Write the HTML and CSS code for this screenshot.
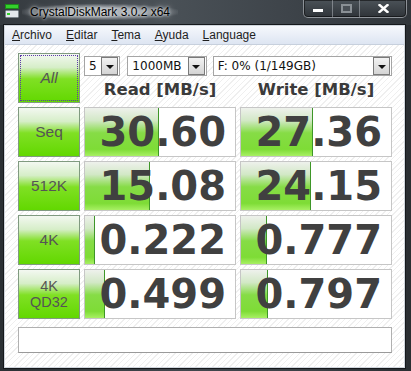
FILE: index.html
```html
<!DOCTYPE html>
<html lang="es">
<head>
  <meta charset="UTF-8">
  <title>CrystalDiskMark 3.0.2 x64</title>
  <link rel="stylesheet" href="styles.css">
</head>
<body>

  <div class="window">

    <!-- ====== Title Bar ====== -->
    <div class="titlebar">
      <svg class="app-icon" width="14" height="14" viewBox="0 0 14 14">
        <rect x="0.5" y="0.5" width="13" height="4" fill="#34d02c" stroke="#1d8a1a"/>
        <rect x="0.5" y="6.5" width="13" height="7" rx="1" fill="#e4e8ec" stroke="#7d858c"/>
        <rect x="2" y="9" width="3" height="2" fill="#34d02c"/>
      </svg>
      <span class="title">CrystalDiskMark 3.0.2 x64</span>
      <div class="caption">
        <span class="cap cap-min"><i></i></span>
        <span class="cap cap-max"><i></i></span>
        <span class="cap cap-close">
          <svg width="11" height="9" viewBox="0 0 11 9">
            <path d="M1.5 1 L9.5 8 M9.5 1 L1.5 8" stroke="#fff" stroke-width="2.4" stroke-linecap="square"/>
          </svg>
        </span>
      </div>
    </div>

    <!-- ====== Client Area ====== -->
    <div class="client">
      <div class="menubar">
        <span><u>A</u>rchivo</span>
        <span><u>E</u>ditar</span>
        <span><u>T</u>ema</span>
        <span><u>A</u>yuda</span>
        <span><u>L</u>anguage</span>
      </div>

      <div class="board">
        <div class="label all"><span>All</span></div>
        <div class="top">
          <div class="selects">
            <div class="select sel-count"><span>5</span><b class="arrow"></b></div>
            <div class="select sel-size"><span>1000MB</span><b class="arrow"></b></div>
            <div class="select sel-drive"><span>F: 0% (1/149GB)</span><b class="arrow"></b></div>
          </div>
          <div class="heads">
            <div>Read [MB/s]</div>
            <div>Write [MB/s]</div>
          </div>
        </div>

        <div class="label">Seq</div>
        <div class="cell"><div class="bar" style="width:74px"></div><span>30.60</span></div>
        <div class="cell"><div class="bar" style="width:72px"></div><span>27.36</span></div>

        <div class="label">512K</div>
        <div class="cell"><div class="bar" style="width:65px"></div><span>15.08</span></div>
        <div class="cell"><div class="bar" style="width:70px"></div><span>24.15</span></div>

        <div class="label">4K</div>
        <div class="cell"><div class="bar" style="width:10px"></div><span>0.222</span></div>
        <div class="cell"><div class="bar" style="width:26px"></div><span>0.777</span></div>

        <div class="label two"><span>4K</span><span>QD32</span></div>
        <div class="cell"><div class="bar" style="width:20px"></div><span>0.499</span></div>
        <div class="cell"><div class="bar" style="width:27px"></div><span>0.797</span></div>

        <div class="status"></div>
      </div>
    </div>

  </div>

</body>
</html>
```

FILE: styles.css
```css
/* ====== General ====== */
body {
  margin: 0;
  background: #2c3136;
  font-family: "Liberation Sans", Arial, sans-serif;
}

.window {
  width: 411px;
  height: 371px;
  display: flex;
  flex-direction: column;
  background: linear-gradient(90deg, #2b3034 0%, #41474d 45%, #3a4045 75%, #2a2e32 100%);
}

/* ====== Title Bar ====== */
.titlebar {
  height: 25px;
  display: flex;
  align-items: flex-start;
  padding: 0 5px 0 5px;
  background: linear-gradient(90deg, #353a3f 0%, #4a5157 40%, #3e444a 70%, #30353a 100%);
}

.app-icon {
  margin-top: 4px;
}

.title {
  margin: 4px 0 0 3px;
  padding: 0 8px;
  font-size: 12px;
  line-height: 16px;
  color: #000;
  background: radial-gradient(ellipse at center, rgba(200,205,210,0.75) 35%, rgba(200,205,210,0) 75%);
  text-shadow: 0 0 3px rgba(235,238,240,0.9), 0 0 6px rgba(235,238,240,0.8);
}

.caption {
  margin-left: auto;
  margin-right: -1px;
  display: flex;
  height: 17px;
  border: 1px solid rgba(200,205,210,0.55);
  border-top: none;
  border-radius: 0 0 5px 5px;
  background: linear-gradient(#4b5258, #2f3439);
  box-shadow: inset 0 0 0 1px rgba(0,0,0,0.5);
}

.cap {
  display: flex;
  align-items: center;
  justify-content: center;
}

.cap-min {
  width: 28px;
  border-right: 1px solid rgba(200,205,210,0.45);
}

.cap-min i {
  width: 10px;
  height: 3px;
  margin-top: 4px;
  background: #fff;
}

.cap-max {
  width: 26px;
  border-right: 1px solid rgba(200,205,210,0.45);
}

.cap-max i {
  width: 7px;
  height: 5px;
  border: 2px solid #8a9095;
  background: #4a5056;
}

.cap-close {
  width: 46px;
}

/* ====== Client ====== */
.client {
  flex: 1;
  margin: 0 6px 3px 4px;
  border: 1px solid #cfd5dc;
  box-shadow: 0 0 0 1px #15181b;
  display: flex;
  flex-direction: column;
  background: repeating-linear-gradient(-45deg, #ffffff 0 3px, #efefef 3px 4px);
}

.menubar {
  height: 18px;
  display: flex;
  align-items: center;
  background: linear-gradient(#f6f8fc, #dde5f2);
  border-bottom: 1px solid #c7d0dd;
  font-size: 12px;
  color: #1e1e1e;
}

.menubar span {
  padding: 0 7px;
}

/* ====== Board ====== */
.board {
  display: grid;
  grid-template-columns: 62px 152px 152px;
  grid-template-rows: repeat(5, 50px) 30px;
  gap: 4px;
  padding: 8px 0 0 13px;
}

.label {
  display: flex;
  flex-direction: column;
  align-items: center;
  justify-content: center;
  text-align: center;
  border: 1px solid #809a80;
  background: linear-gradient(#f3f8f1 0%, #d6eec8 28%, #80e024 52%, #62d800 100%);
  font-family: "Liberation Sans", Arial, sans-serif;
  font-size: 15.5px;
  color: #555;
}

.label.two {
  font-size: 14.5px;
  line-height: 16px;
}

.label.all span {
  font-style: italic;
}

.label.all {
  outline: 1px dotted #5c3aa8;
  outline-offset: -3px;
}

.top {
  grid-column: span 2;
  display: flex;
  flex-direction: column;
}

.selects {
  display: flex;
  margin-top: 3px;
  height: 20px;
}

.select {
  display: flex;
  align-items: center;
  justify-content: space-between;
  background: #fff;
  border: 1px solid #a5a5a5;
  padding: 0 1px 0 4px;
  font-family: "DejaVu Sans", sans-serif;
  font-size: 12px;
  color: #111;
}

.sel-count {
  width: 30px;
}

.sel-size {
  width: 74px;
  margin-left: 7px;
}

.sel-drive {
  width: 176px;
  margin-left: 6px;
}

.arrow {
  width: 15px;
  height: 16px;
  border: 1px solid #7a7a7a;
  background: linear-gradient(#f2f2f2, #d4d4d4);
  display: flex;
  align-items: center;
  justify-content: center;
}

.arrow::after {
  content: "";
  border-left: 4px solid transparent;
  border-right: 4px solid transparent;
  border-top: 4px solid #111;
  margin-top: 2px;
}

.heads {
  flex: 1;
  display: grid;
  grid-template-columns: 152px 152px;
  gap: 4px;
  align-items: end;
  padding-bottom: 3px;
}

.heads div {
  text-align: center;
  font-family: "DejaVu Sans", sans-serif;
  font-weight: bold;
  font-size: 16.5px;
  line-height: 20px;
  color: #3a3a3a;
}

/* ====== Result Cells ====== */
.cell {
  position: relative;
  display: flex;
  align-items: center;
  justify-content: flex-end;
  padding-right: 9px;
  background: #fff;
  border: 1px solid #c6c6c6;
  font-family: "DejaVu Sans", sans-serif;
  font-weight: bold;
  font-size: 40px;
  line-height: 1;
  color: #404040;
}

.cell span {
  position: relative;
}

.bar {
  position: absolute;
  left: 0;
  top: 0;
  bottom: 0;
  background: linear-gradient(#eef1ec 0%, #d2e8c6 26%, #86dc46 52%, #7edc36 86%, #a8f064 100%);
  border-right: 1px solid #3e9628;
  box-sizing: border-box;
}

.status {
  grid-column: span 3;
  margin-top: 4px;
  background: #fff;
  border: 1px solid #b0b0b0;
  border-bottom-color: #9a9a9a;
}
```
